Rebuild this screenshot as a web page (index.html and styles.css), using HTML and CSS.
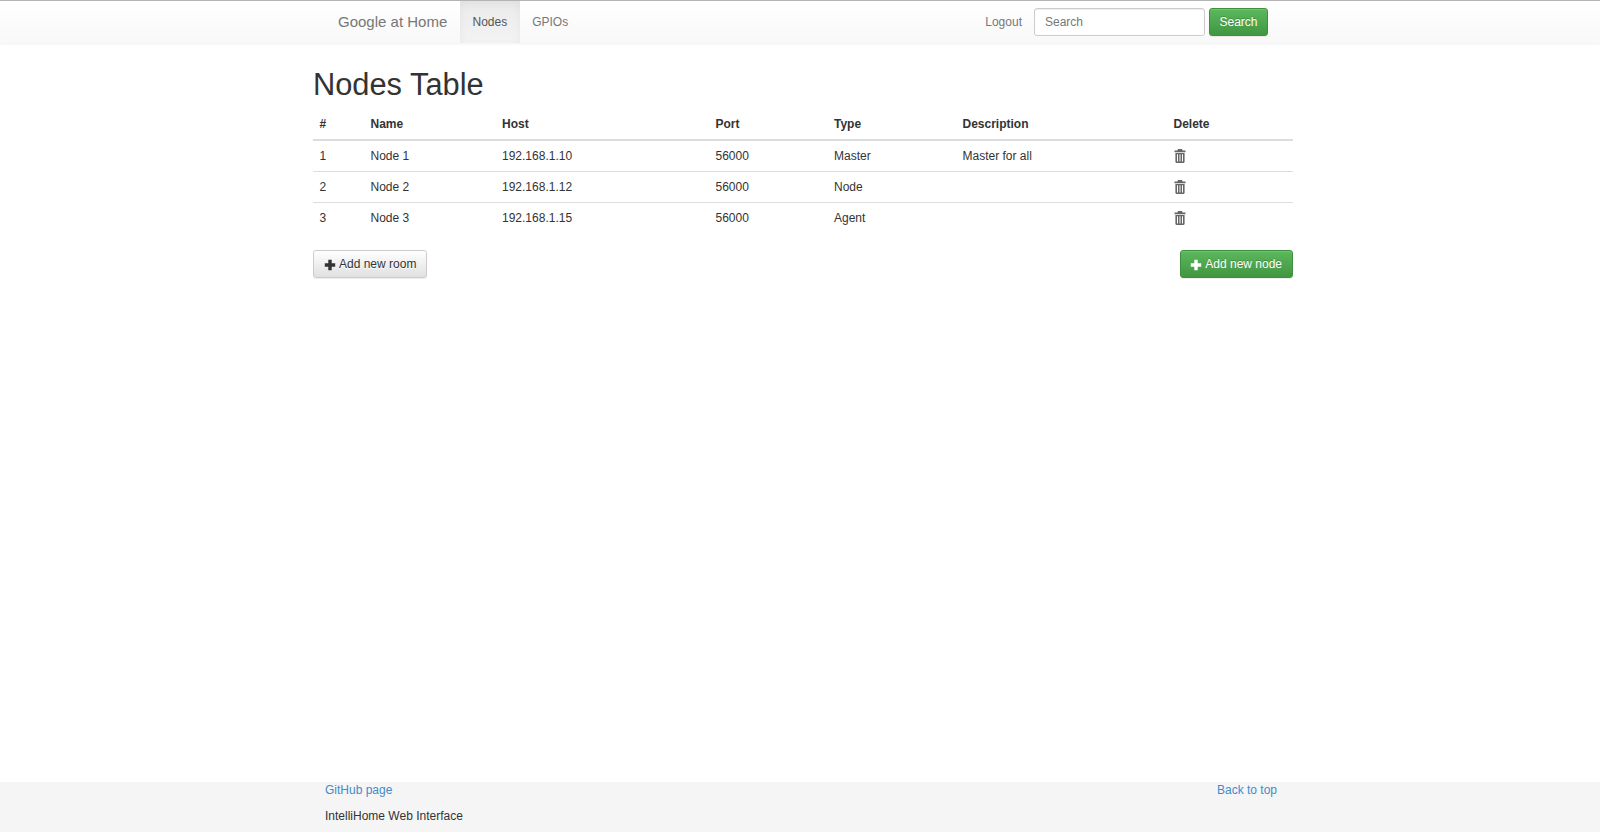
FILE: index.html
```html
<!DOCTYPE html>
<html lang="en">
<head>
<meta charset="utf-8">
<title>Nodes Table</title>
<link rel="stylesheet" href="styles.css">
</head>
<body>
<nav class="navbar">
  <div class="nav-inner">
    <a class="brand" href="#">Google at Home</a>
    <ul class="nav-links">
      <li class="active"><a href="#">Nodes</a></li>
      <li><a href="#">GPIOs</a></li>
    </ul>
    <div class="nav-right">
      <a class="logout" href="#">Logout</a>
      <input class="search" type="text" placeholder="Search">
      <button class="btn btn-success btn-search">Search</button>
    </div>
  </div>
</nav>
<main class="content">
  <h1>Nodes Table</h1>
  <table>
    <colgroup>
      <col class="c1"><col class="c2"><col class="c3"><col class="c4"><col class="c5"><col class="c6"><col class="c7">
    </colgroup>
    <thead>
      <tr><th>#</th><th>Name</th><th>Host</th><th>Port</th><th>Type</th><th>Description</th><th>Delete</th></tr>
    </thead>
    <tbody>
      <tr><td>1</td><td>Node 1</td><td>192.168.1.10</td><td>56000</td><td>Master</td><td>Master for all</td><td><svg class="trash" viewBox="0 0 12 14"><use href="#trash"/></svg></td></tr>
      <tr><td>2</td><td>Node 2</td><td>192.168.1.12</td><td>56000</td><td>Node</td><td></td><td><svg class="trash" viewBox="0 0 12 14"><use href="#trash"/></svg></td></tr>
      <tr><td>3</td><td>Node 3</td><td>192.168.1.15</td><td>56000</td><td>Agent</td><td></td><td><svg class="trash" viewBox="0 0 12 14"><use href="#trash"/></svg></td></tr>
    </tbody>
  </table>
  <div class="actions">
    <button class="btn btn-default"><svg class="plus" viewBox="0 0 12 12"><use href="#plus"/></svg>Add new room</button>
    <button class="btn btn-success btn-add"><svg class="plus" viewBox="0 0 12 12"><use href="#plus"/></svg>Add new node</button>
  </div>
</main>
<footer class="footer">
  <div class="foot-inner">
    <div class="foot-row"><a href="#">GitHub page</a><a href="#">Back to top</a></div>
    <p>IntelliHome Web Interface</p>
  </div>
</footer>
<svg class="defs" aria-hidden="true">
  <defs>
    <symbol id="trash" viewBox="0 0 12 14">
      <path fill-rule="evenodd" d="M4 0h4l.6 1.4H11.500v1.800H.5V1.400H3.400zM1.400 4h9.200v8.800c0 .7-.5 1.200-1.200 1.200H2.600c-.7 0-1.200-.5-1.200-1.200zM3 5.200v7.400h1v-7.400zM5.500 5.200v7.400h1v-7.400zM8 5.200v7.400h1v-7.400z"/>
    </symbol>
    <symbol id="plus" viewBox="0 0 12 12">
      <path d="M4.300.8h3.400v3.500h3.500v3.400H7.700v3.500H4.300V7.700H.8V4.300h3.500z"/>
    </symbol>
  </defs>
</svg>
</body>
</html>
```
FILE: styles.css
```css
* { box-sizing: border-box; }
html, body { height: 100%; }
body {
  margin: 0;
  height: 832px;
  overflow: hidden;
  display: flex;
  flex-direction: column;
  font-family: "Liberation Sans", Arial, sans-serif;
  font-size: 12px;
  line-height: 17px;
  color: #333;
  background: #fff;
}
a { text-decoration: none; }
.defs { width: 0; height: 0; position: absolute; }

.navbar {
  height: 43px;
  flex: none;
  border-top: 1px solid #b4b4b4;
  background: linear-gradient(to bottom, #fff 0%, #f8f8f8 100%);
  box-shadow: 0 1px 3px rgba(0,0,0,.06);
}
.nav-inner {
  width: 980px;
  margin-left: 313px;
  height: 42px;
  display: flex;
  align-items: stretch;
}
.brand {
  margin-left: 25px;
  width: 122px;
  font-size: 15px;
  line-height: 42px;
  color: #777;
}
.nav-links { display: flex; list-style: none; margin: 0; padding: 0; }
.nav-links a {
  display: block;
  padding: 0 12.500px;
  line-height: 42px;
  color: #777;
}
.nav-links .active a {
  color: #555;
  background: linear-gradient(to bottom, #ebebeb 0%, #f3f3f3 100%);
  box-shadow: inset 0 3px 9px rgba(0,0,0,.05);
}
.nav-right {
  margin-left: auto;
  margin-right: 25px;
  display: flex;
  align-items: center;
}
.logout { color: #777; margin-right: 12px; }
.search {
  width: 171px;
  height: 28px;
  padding: 0 10px;
  margin-right: 4px;
  border: 1px solid #ccc;
  border-radius: 3px;
  font: inherit;
  color: #555;
  box-shadow: inset 0 1px 1px rgba(0,0,0,.075);
}
.search::placeholder { color: #777; opacity: 1; }

.btn {
  display: inline-flex;
  align-items: center;
  height: 28px;
  padding: 0 10px;
  border: 1px solid;
  border-radius: 3px;
  font: inherit;
  white-space: nowrap;
}
.btn-search { padding: 0 9.500px; }
.btn-add { padding-left: 9px; }
.btn-success {
  color: #fff;
  background: linear-gradient(to bottom, #5cb85c 0%, #419641 100%);
  border-color: #3e8f3e;
  box-shadow: inset 0 1px 0 rgba(255,255,255,.15), 0 1px 1px rgba(0,0,0,.075);
  text-shadow: 0 -1px 0 rgba(0,0,0,.2);
}
.btn-default {
  color: #333;
  background: linear-gradient(to bottom, #fff 0%, #e0e0e0 100%);
  border-color: #ccc;
  box-shadow: inset 0 1px 0 rgba(255,255,255,.15), 0 1px 1px rgba(0,0,0,.075);
  text-shadow: 0 1px 0 #fff;
}
.plus { width: 12px; height: 12px; margin-right: 3px; margin-top: 2px; fill: currentColor; }

.content {
  flex: 1;
  width: 980px;
  margin-left: 313px;
}
h1 {
  margin: 25px 0 7px;
  font-size: 30.800px;
  font-weight: 500;
  line-height: 34px;
  color: #333;
}
table { width: 100%; border-collapse: collapse; table-layout: fixed; }
.c1 { width: 51px; }
.c2 { width: 131.500px; }
.c3 { width: 213.500px; }
.c4 { width: 118.500px; }
.c5 { width: 128.500px; }
.c6 { width: 211px; }
th, td { text-align: left; vertical-align: top; }
th { border-bottom: 2px solid #ddd; font-weight: 700; padding: 6.500px 6.500px 6px; }
td { border-bottom: 1px solid #ddd; height: 31px; padding: 7px 6.500px 6px; }
tbody tr:last-child td { border-bottom: 0; }
.trash { display: block; width: 12px; height: 14px; margin: 1px 0 0 .5px; fill: #666; }
.actions { display: flex; justify-content: space-between; margin-top: 17px; }

.footer { flex: none; height: 50px; background: #f5f5f5; }
.foot-inner { width: 980px; margin-left: 312px; padding: 0 15px 0 13px; }
.foot-row { display: flex; justify-content: space-between; line-height: 17px; }
.foot-row a { color: #428bca; }
.foot-inner p { margin: 9px 0 0; line-height: 17px; color: #333; }
```
